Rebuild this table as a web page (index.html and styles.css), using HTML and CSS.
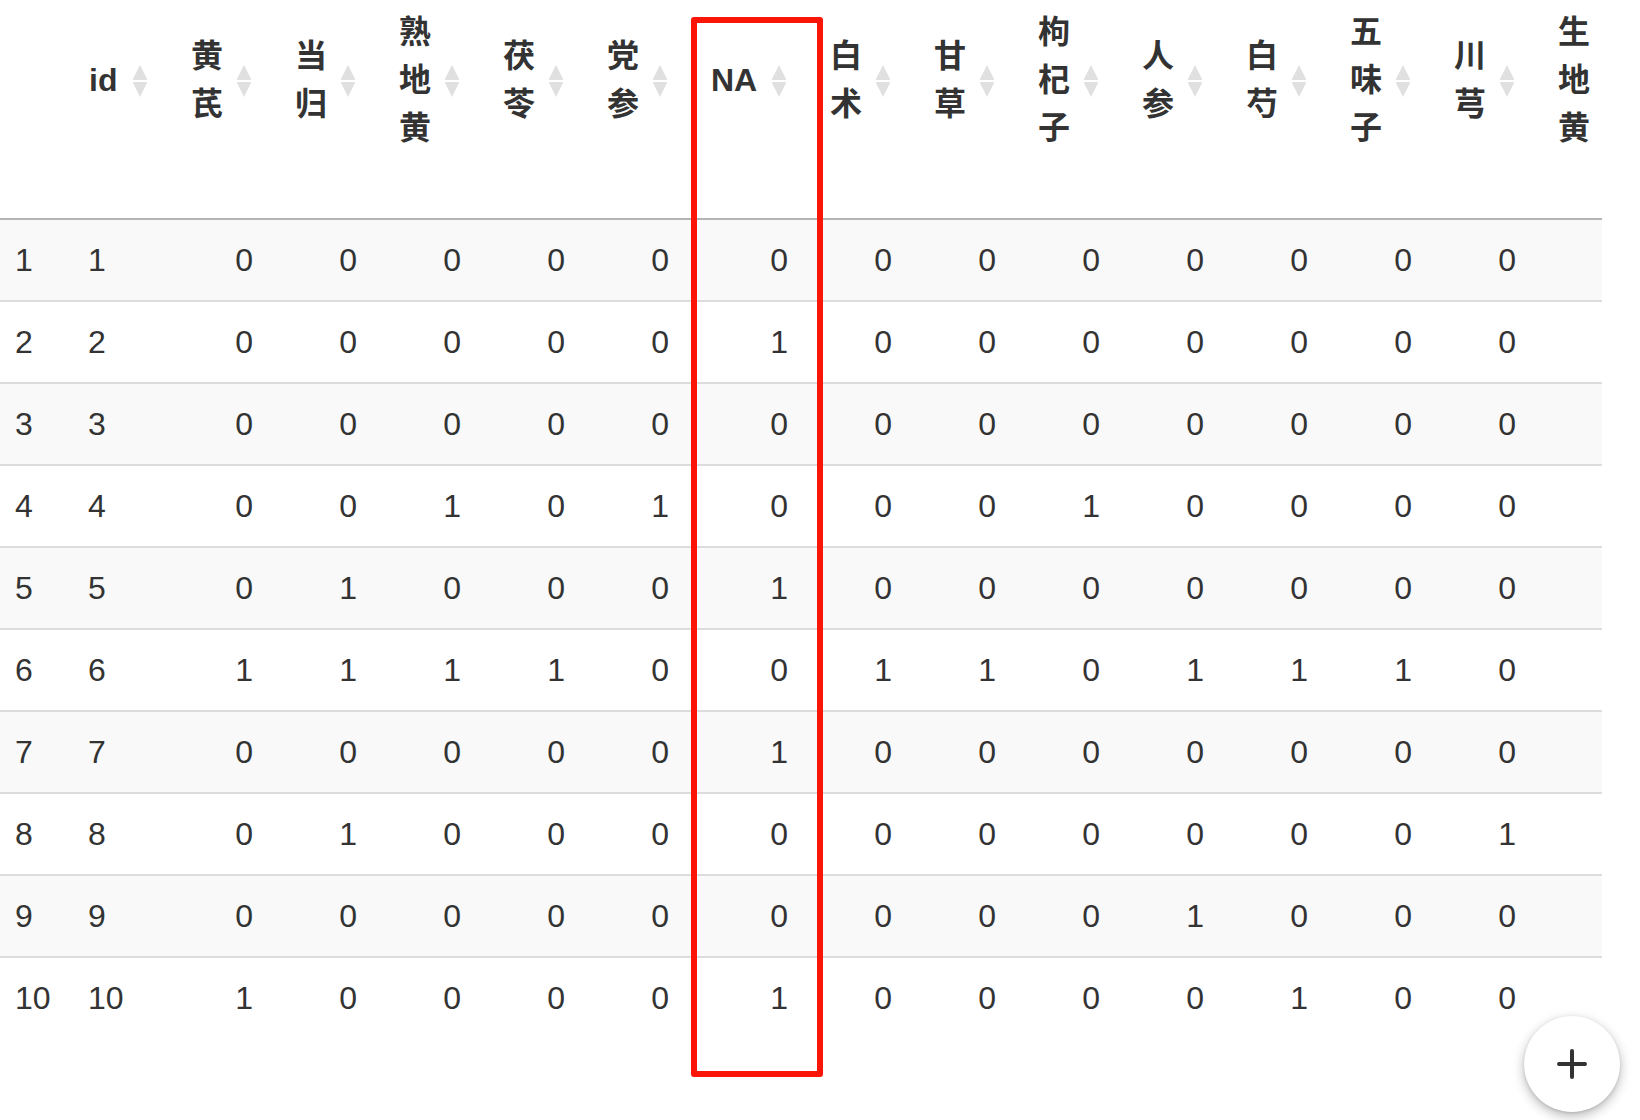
FILE: index.html
```html
<!DOCTYPE html>
<html lang="zh">
<head>
<meta charset="utf-8">
<title>DataTable</title>
<link rel="stylesheet" href="styles.css">
</head>
<body>
<div class="page">
  <div class="scroll">
    <table class="dt">
      <colgroup>
        <col class="c-idx"><col class="c-id">
        <col class="c-n"><col class="c-n"><col class="c-n"><col class="c-n"><col class="c-n">
        <col class="c-na">
        <col class="c-n"><col class="c-n"><col class="c-n"><col class="c-n"><col class="c-n"><col class="c-n"><col class="c-n"><col class="c-n">
      </colgroup>
      <thead>
        <tr>
          <th class="idx"></th>
          <th class="sort id">id<svg class="si" viewBox="0 0 16 34"><path d="M8 1 L15 15 Q15.5 16 14.5 16 L1.5 16 Q0.5 16 1 15 Z"/><path d="M8 33 L15 19 Q15.5 18 14.5 18 L1.5 18 Q0.5 18 1 19 Z"/></svg></th>
          <th class="sort">黄芪<svg class="si" viewBox="0 0 16 34"><path d="M8 1 L15 15 Q15.5 16 14.5 16 L1.5 16 Q0.5 16 1 15 Z"/><path d="M8 33 L15 19 Q15.5 18 14.5 18 L1.5 18 Q0.5 18 1 19 Z"/></svg></th>
          <th class="sort">当归<svg class="si" viewBox="0 0 16 34"><path d="M8 1 L15 15 Q15.5 16 14.5 16 L1.5 16 Q0.5 16 1 15 Z"/><path d="M8 33 L15 19 Q15.5 18 14.5 18 L1.5 18 Q0.5 18 1 19 Z"/></svg></th>
          <th class="sort">熟地黄<svg class="si" viewBox="0 0 16 34"><path d="M8 1 L15 15 Q15.5 16 14.5 16 L1.5 16 Q0.5 16 1 15 Z"/><path d="M8 33 L15 19 Q15.5 18 14.5 18 L1.5 18 Q0.5 18 1 19 Z"/></svg></th>
          <th class="sort">茯苓<svg class="si" viewBox="0 0 16 34"><path d="M8 1 L15 15 Q15.5 16 14.5 16 L1.5 16 Q0.5 16 1 15 Z"/><path d="M8 33 L15 19 Q15.5 18 14.5 18 L1.5 18 Q0.5 18 1 19 Z"/></svg></th>
          <th class="sort">党参<svg class="si" viewBox="0 0 16 34"><path d="M8 1 L15 15 Q15.5 16 14.5 16 L1.5 16 Q0.5 16 1 15 Z"/><path d="M8 33 L15 19 Q15.5 18 14.5 18 L1.5 18 Q0.5 18 1 19 Z"/></svg></th>
          <th class="sort">NA<svg class="si" viewBox="0 0 16 34"><path d="M8 1 L15 15 Q15.5 16 14.5 16 L1.5 16 Q0.5 16 1 15 Z"/><path d="M8 33 L15 19 Q15.5 18 14.5 18 L1.5 18 Q0.5 18 1 19 Z"/></svg></th>
          <th class="sort">白术<svg class="si" viewBox="0 0 16 34"><path d="M8 1 L15 15 Q15.5 16 14.5 16 L1.5 16 Q0.5 16 1 15 Z"/><path d="M8 33 L15 19 Q15.5 18 14.5 18 L1.5 18 Q0.5 18 1 19 Z"/></svg></th>
          <th class="sort">甘草<svg class="si" viewBox="0 0 16 34"><path d="M8 1 L15 15 Q15.5 16 14.5 16 L1.5 16 Q0.5 16 1 15 Z"/><path d="M8 33 L15 19 Q15.5 18 14.5 18 L1.5 18 Q0.5 18 1 19 Z"/></svg></th>
          <th class="sort">枸杞子<svg class="si" viewBox="0 0 16 34"><path d="M8 1 L15 15 Q15.5 16 14.5 16 L1.5 16 Q0.5 16 1 15 Z"/><path d="M8 33 L15 19 Q15.5 18 14.5 18 L1.5 18 Q0.5 18 1 19 Z"/></svg></th>
          <th class="sort">人参<svg class="si" viewBox="0 0 16 34"><path d="M8 1 L15 15 Q15.5 16 14.5 16 L1.5 16 Q0.5 16 1 15 Z"/><path d="M8 33 L15 19 Q15.5 18 14.5 18 L1.5 18 Q0.5 18 1 19 Z"/></svg></th>
          <th class="sort">白芍<svg class="si" viewBox="0 0 16 34"><path d="M8 1 L15 15 Q15.5 16 14.5 16 L1.5 16 Q0.5 16 1 15 Z"/><path d="M8 33 L15 19 Q15.5 18 14.5 18 L1.5 18 Q0.5 18 1 19 Z"/></svg></th>
          <th class="sort">五味子<svg class="si" viewBox="0 0 16 34"><path d="M8 1 L15 15 Q15.5 16 14.5 16 L1.5 16 Q0.5 16 1 15 Z"/><path d="M8 33 L15 19 Q15.5 18 14.5 18 L1.5 18 Q0.5 18 1 19 Z"/></svg></th>
          <th class="sort">川芎<svg class="si" viewBox="0 0 16 34"><path d="M8 1 L15 15 Q15.5 16 14.5 16 L1.5 16 Q0.5 16 1 15 Z"/><path d="M8 33 L15 19 Q15.5 18 14.5 18 L1.5 18 Q0.5 18 1 19 Z"/></svg></th>
          <th class="sort">生地黄</th>
        </tr>
      </thead>
      <tbody>
        <tr><td class="idx">1</td><td class="l">1</td><td>0</td><td>0</td><td>0</td><td>0</td><td>0</td><td>0</td><td>0</td><td>0</td><td>0</td><td>0</td><td>0</td><td>0</td><td>0</td><td></td></tr>
        <tr><td class="idx">2</td><td class="l">2</td><td>0</td><td>0</td><td>0</td><td>0</td><td>0</td><td>1</td><td>0</td><td>0</td><td>0</td><td>0</td><td>0</td><td>0</td><td>0</td><td></td></tr>
        <tr><td class="idx">3</td><td class="l">3</td><td>0</td><td>0</td><td>0</td><td>0</td><td>0</td><td>0</td><td>0</td><td>0</td><td>0</td><td>0</td><td>0</td><td>0</td><td>0</td><td></td></tr>
        <tr><td class="idx">4</td><td class="l">4</td><td>0</td><td>0</td><td>1</td><td>0</td><td>1</td><td>0</td><td>0</td><td>0</td><td>1</td><td>0</td><td>0</td><td>0</td><td>0</td><td></td></tr>
        <tr><td class="idx">5</td><td class="l">5</td><td>0</td><td>1</td><td>0</td><td>0</td><td>0</td><td>1</td><td>0</td><td>0</td><td>0</td><td>0</td><td>0</td><td>0</td><td>0</td><td></td></tr>
        <tr><td class="idx">6</td><td class="l">6</td><td>1</td><td>1</td><td>1</td><td>1</td><td>0</td><td>0</td><td>1</td><td>1</td><td>0</td><td>1</td><td>1</td><td>1</td><td>0</td><td></td></tr>
        <tr><td class="idx">7</td><td class="l">7</td><td>0</td><td>0</td><td>0</td><td>0</td><td>0</td><td>1</td><td>0</td><td>0</td><td>0</td><td>0</td><td>0</td><td>0</td><td>0</td><td></td></tr>
        <tr><td class="idx">8</td><td class="l">8</td><td>0</td><td>1</td><td>0</td><td>0</td><td>0</td><td>0</td><td>0</td><td>0</td><td>0</td><td>0</td><td>0</td><td>0</td><td>1</td><td></td></tr>
        <tr><td class="idx">9</td><td class="l">9</td><td>0</td><td>0</td><td>0</td><td>0</td><td>0</td><td>0</td><td>0</td><td>0</td><td>0</td><td>1</td><td>0</td><td>0</td><td>0</td><td></td></tr>
        <tr><td class="idx">10</td><td class="l">10</td><td>1</td><td>0</td><td>0</td><td>0</td><td>0</td><td>1</td><td>0</td><td>0</td><td>0</td><td>0</td><td>1</td><td>0</td><td>0</td><td></td></tr>
      </tbody>
    </table>
  </div>
  <div class="highlight"></div>
  <button class="fab" type="button" aria-label="add"><svg viewBox="0 0 30 30"><path d="M15 2 V28 M2 15 H28"/></svg></button>
</div>
</body>
</html>
```

FILE: styles.css
```css
html, body {
  margin: 0;
  padding: 0;
  background: #ffffff;
}

body {
  font-family: "Helvetica Neue", Helvetica, "Liberation Sans", Arial, "Noto Sans CJK SC", sans-serif;
  font-size: 32px;
  line-height: 48px;
  color: #333333;
}

.page {
  position: relative;
  width: 1640px;
  height: 1120px;
  overflow: hidden;
}

.scroll {
  width: 1602px;
  overflow: hidden;
}

.dt {
  width: 1642px;
  table-layout: fixed;
  border-collapse: separate;
  border-spacing: 0;
}

.c-idx { width: 66px; }
.c-id { width: 105px; }
.c-n { width: 104px; }
.c-na { width: 119px; }

.dt th {
  position: relative;
  font-weight: bold;
  text-align: left;
  vertical-align: middle;
  padding: 8px 52px 66px 20px;
  border-bottom: 2px solid #b4b4b4;
  word-break: break-all;
}

.dt th.idx {
  padding-left: 15px;
  padding-right: 10px;
}

.dt th.id {
  padding-left: 23px;
  padding-right: 49px;
}

.si {
  position: absolute;
  top: 64px;
  right: 23px;
  width: 16px;
  height: 34px;
  fill: #e0e0e0;
}

.dt td {
  padding: 16px 22px 16px 20px;
  text-align: right;
  white-space: nowrap;
  overflow: hidden;
  border-bottom: 2px solid #dcdcdc;
}

.dt td.idx {
  text-align: left;
  padding-left: 15px;
  padding-right: 10px;
}

.dt td.l {
  text-align: left;
  padding-left: 22px;
}

.dt tbody tr:nth-child(odd) td {
  background: #f9f9f9;
}

.dt tbody tr:last-child td {
  border-bottom: none;
}

.highlight {
  position: absolute;
  left: 691px;
  top: 17px;
  width: 120px;
  height: 1048px;
  border: 6px solid #fb1408;
  border-radius: 3px;
  pointer-events: none;
}

.fab {
  position: absolute;
  right: 20px;
  bottom: 8px;
  width: 96px;
  height: 96px;
  border: none;
  border-radius: 50%;
  background: #ffffff;
  box-shadow: 0 4px 12px rgba(0, 0, 0, 0.28), 0 1px 3px rgba(0, 0, 0, 0.12);
  padding: 0;
  display: flex;
  align-items: center;
  justify-content: center;
}

.fab svg {
  width: 30px;
  height: 30px;
  fill: none;
  stroke: #333333;
  stroke-width: 4;
  stroke-linecap: round;
}
```
